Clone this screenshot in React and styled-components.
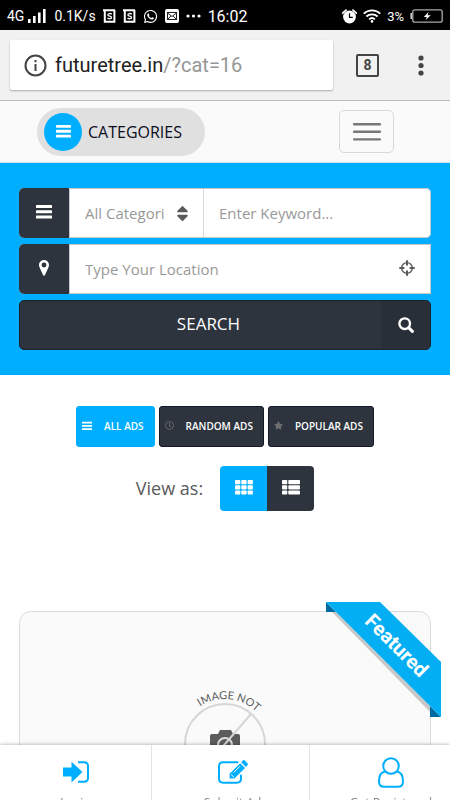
import React from 'react';
import styled, { createGlobalStyle, ThemeProvider } from 'styled-components';
import { FaRegClock, FaSort, FaStar, FaWhatsapp } from 'react-icons/fa';

const THEME = {
    colors: {
        primary: '#00aeff',
        dark: '#2d343e',
        darker: '#292f38',
        light: '#fafafa',
        white: '#ffffff',
        border: '#d8d8d8',
        placeholder: '#999999',
        text: '#5a5a5a',
    },
    fonts: {
        system: 'Roboto, sans-serif',
        page: '"Open Sans", sans-serif',
    },
};

const GlobalStyle = createGlobalStyle`
    * {
        box-sizing: border-box;
    }

    body {
        margin: 0;
        background-color: ${THEME.colors.white};
        font-family: ${THEME.fonts.page};
    }

    button, input, select {
        font-family: inherit;
        margin: 0;
    }

    svg {
        display: block;
        flex-shrink: 0;
    }
`;

const Screen = styled.div`
    height: 100vh;
    overflow: hidden;
`;

const StyleStatusBar = styled.div`
    display: flex;
    align-items: center;
    justify-content: space-between;
    height: 30px;
    padding: 2px 7px 0;
    background-color: #000;
    color: ${({ theme }) => theme.colors.white};
    font-family: ${({ theme }) => theme.fonts.system};
    font-size: 14px;

    .group {
        display: flex;
        align-items: center;
    }

    .group--left {
        gap: 7px;
    }

    .group--right {
        gap: 6px;
        font-size: 13px;
    }

    .network {
        display: flex;
        align-items: center;
        gap: 4px;
    }

    .clock {
        font-size: 16px;
    }
`;

const StyleBrowserBar = styled.div`
    display: flex;
    align-items: center;
    height: 71px;
    padding: 0 26px 0 10px;
    background-color: #f1f1f1;
    border-bottom: 1px solid #bbb;
`;

const UrlBox = styled.div`
    display: flex;
    align-items: center;
    gap: 8px;
    flex: 1;
    height: 50px;
    padding: 0 14px;
    background-color: ${({ theme }) => theme.colors.white};
    border-radius: 2px;
    box-shadow: 0 1px 2px rgba(0, 0, 0, 0.3);
    color: #222;
    font-family: ${({ theme }) => theme.fonts.system};
    font-size: 20px;

    span span {
        color: #969696;
    }
`;

const TabCount = styled.button`
    width: 23px;
    height: 23px;
    margin: 0 39px 0 23px;
    padding: 0;
    background: none;
    border: 2px solid #444;
    border-radius: 2px;
    color: #444;
    font-family: ${({ theme }) => theme.fonts.system};
    font-size: 14px;
    font-weight: 700;
    line-height: 19px;
`;

const PlainButton = styled.button`
    padding: 0;
    background: none;
    border: 0;
    color: #444;
`;

const StyleHeader = styled.header`
    display: flex;
    align-items: center;
    justify-content: space-between;
    height: 62px;
    padding: 0 56px 0 37px;
    background-color: ${({ theme }) => theme.colors.light};
    border-bottom: 1px solid #d5e4ee;
`;

const CategoriesButton = styled.button`
    display: flex;
    align-items: center;
    gap: 6px;
    height: 48px;
    padding: 0 23px 0 7px;
    background-color: #e0e0e0;
    border: 0;
    border-radius: 24px;
    color: #0c0c1c;
    font-size: 16px;
    font-weight: 500;

    .circle {
        display: grid;
        place-items: center;
        width: 38px;
        height: 38px;
        background-color: ${({ theme }) => theme.colors.primary};
        border-radius: 50%;
        color: ${({ theme }) => theme.colors.white};
    }
`;

const MenuButton = styled.button`
    display: grid;
    place-items: center;
    width: 55px;
    height: 43px;
    padding: 0;
    background: none;
    border: 1px solid ${({ theme }) => theme.colors.border};
    border-radius: 5px;
    color: #777;
`;

const SearchForm = styled.form`
    display: flex;
    flex-direction: column;
    gap: 6px;
    padding: 25px 19px;
    background-color: ${({ theme }) => theme.colors.primary};
`;

const Field = styled.div`
    display: flex;
    height: 50px;
    overflow: hidden;
    background-color: ${({ theme }) => theme.colors.white};
    border-radius: ${({ $rounded }) => ($rounded ? '5px' : '5px 0 0 5px')};

    .controls {
        display: flex;
        flex: 1;
        min-width: 0;
        border: 1px solid #c4c8cc;
        border-radius: ${({ $rounded }) => ($rounded ? '0 5px 5px 0' : '0')};
    }
`;

const FieldIcon = styled.label`
    display: grid;
    place-items: center;
    flex: 0 0 50px;
    padding-bottom: 2px;
    background-color: ${({ theme }) => theme.colors.dark};
    color: ${({ theme }) => theme.colors.white};
`;

const SelectWrap = styled.div`
    display: grid;
    flex: 0 0 134px;
    align-items: center;
    border-right: 1px solid ${({ theme }) => theme.colors.border};
    color: ${({ theme }) => theme.colors.text};

    select {
        grid-area: 1 / 1;
        width: 100%;
        height: 48px;
        padding: 0 38px 0 15px;
        appearance: none;
        background: none;
        border: 0;
        color: ${({ theme }) => theme.colors.placeholder};
        font-size: 15px;
    }

    svg {
        grid-area: 1 / 1;
        justify-self: end;
        margin-right: 11px;
        pointer-events: none;
    }
`;

const TextInput = styled.input`
    flex: 1;
    min-width: 0;
    padding: 0 15px;
    background: none;
    border: 0;
    color: ${({ theme }) => theme.colors.text};
    font-size: 15px;

    &::placeholder {
        color: ${({ theme }) => theme.colors.placeholder};
        opacity: 1;
    }
`;

const LocateButton = styled(PlainButton)`
    padding: 0 15px 2px;
    color: ${({ theme }) => theme.colors.text};
`;

const SearchButton = styled.button`
    display: flex;
    align-items: stretch;
    height: 50px;
    padding: 0;
    overflow: hidden;
    background-color: ${({ theme }) => theme.colors.dark};
    border: 1px solid #1c222b;
    border-radius: 5px;
    color: ${({ theme }) => theme.colors.white};
    font-size: 17px;

    .label {
        flex: 1;
        align-self: center;
        padding: 0 0 3px 16px;
    }

    .icon {
        display: grid;
        place-items: center;
        width: 49px;
        background-color: ${({ theme }) => theme.colors.darker};
    }
`;

const Filters = styled.div`
    display: flex;
    justify-content: center;
    gap: 4px;
    padding-top: 31px;
`;

const FilterButton = styled.button`
    display: flex;
    align-items: center;
    gap: 12px;
    height: 41px;
    padding: 0 10px 2px 5px;
    background-color: ${({ theme, $active }) => ($active ? theme.colors.primary : theme.colors.dark)};
    border: 1px solid ${({ theme, $active }) => ($active ? theme.colors.primary : '#14182a')};
    border-radius: 3px;
    color: ${({ theme }) => theme.colors.white};
    font-size: 10px;
    font-weight: 600;
    white-space: nowrap;

    svg {
        color: ${({ $active }) => ($active ? '#fff' : '#6d6d6d')};
    }
`;

const ViewRow = styled.div`
    display: flex;
    align-items: center;
    justify-content: center;
    gap: 17px;
    padding-top: 19px;
    color: ${({ theme }) => theme.colors.text};
    font-size: 18px;

    .label {
        padding-bottom: 2px;
    }

    .toggle {
        display: flex;
    }
`;

const ViewButton = styled.button`
    display: grid;
    place-items: center;
    width: 47px;
    height: 45px;
    padding: 0 0 3px;
    background-color: ${({ theme, $active }) => ($active ? theme.colors.primary : theme.colors.dark)};
    border: 0;
    border-radius: ${({ $active }) => ($active ? '4px 0 0 4px' : '0 4px 4px 0')};
    color: ${({ theme }) => theme.colors.white};
`;

const AdCard = styled.article`
    position: relative;
    display: flex;
    justify-content: center;
    height: 280px;
    margin: 100px 19px 0;
    padding-top: 72px;
    background-color: ${({ theme }) => theme.colors.light};
    border: 1px solid #dcdcdc;
    border-radius: 12px;
`;

const Ribbon = styled.svg`
    position: absolute;
    top: -10px;
    right: -11px;
    font-family: ${({ theme }) => theme.fonts.system};
    font-size: 20px;
    font-weight: 700;
`;

const BottomNav = styled.nav`
    position: fixed;
    right: 0;
    bottom: 0;
    left: 0;
    display: grid;
    grid-template-columns: 152fr 158fr 140fr;
    height: 55px;
    background-color: ${({ theme }) => theme.colors.white};
    box-shadow: 0 0 4px rgba(0, 0, 0, 0.35);
`;

const NavItem = styled.a`
    display: flex;
    flex-direction: column;
    align-items: center;
    gap: 6px;
    padding-top: 11px;
    border-right: 1px solid #e4e4e4;
    color: #888;
    font-size: 12px;
    line-height: 18px;
    text-decoration: none;
    white-space: nowrap;

    &:nth-child(2) {
        padding-left: 4px;
    }

    &:last-child {
        padding-left: 22px;
        border-right: 0;
    }

    .icon {
        display: grid;
        place-items: center;
        height: 32px;
        color: ${({ theme }) => theme.colors.primary};
    }
`;

const BarsIcon = ({ size = 16 }) => (
    <svg width={size} height={size} viewBox="0 0 16 16" fill="currentColor" aria-hidden="true">
        <rect x="0" y="1" width="16" height="3" rx="0.5" />
        <rect x="0" y="6.2" width="16" height="3" rx="0.5" />
        <rect x="0" y="11.4" width="16" height="3" rx="0.5" />
    </svg>
);

const MenuIcon = () => (
    <svg width="28" height="20" viewBox="0 0 28 20" fill="currentColor" aria-hidden="true">
        <rect y="1" width="28" height="2.4" rx="1" />
        <rect y="8.6" width="28" height="2.4" rx="1" />
        <rect y="16.2" width="28" height="2.4" rx="1" />
    </svg>
);

const SignalIcon = () => (
    <svg width="19" height="15" viewBox="0 0 19 15" fill="currentColor" aria-hidden="true">
        <rect x="0" y="10" width="2.6" height="4" />
        <rect x="5" y="7" width="2.6" height="7" />
        <rect x="10" y="3.5" width="2.6" height="10.5" />
        <rect x="15" y="0" width="2.6" height="14" />
    </svg>
);

const AppBadgeIcon = () => (
    <svg width="13" height="14" viewBox="0 0 13 14" fill="none" stroke="currentColor" aria-hidden="true">
        <path d="M0 1.2H12M1.8 1V12.8H11.4V1" strokeWidth="2" />
        <path d="M8.7 5.2C7.8 4.2 4.9 4.3 4.9 5.9C4.9 7.4 8.5 6.8 8.5 8.4C8.5 10 5.2 10 4.5 8.9" strokeWidth="1.4" />
    </svg>
);

const MailIcon = () => (
    <svg width="14" height="14" viewBox="0 0 14 14" aria-hidden="true">
        <rect width="14" height="14" rx="2" fill="#fff" />
        <rect x="2.5" y="3.5" width="9" height="7" fill="none" stroke="#222" />
        <path d="M2.5 4L7 7.5L11.5 4M3 10L5.8 7M11 10L8.2 7" fill="none" stroke="#222" />
    </svg>
);

const MoreIcon = () => (
    <svg width="15" height="4" viewBox="0 0 15 4" fill="currentColor" aria-hidden="true">
        <circle cx="2" cy="2" r="1.6" />
        <circle cx="7.5" cy="2" r="1.6" />
        <circle cx="13" cy="2" r="1.6" />
    </svg>
);

const AlarmIcon = () => (
    <svg width="15" height="15" viewBox="0 0 15 15" aria-hidden="true">
        <path d="M0.7 4.2L4 1.2M14.3 4.2L11 1.2" stroke="#fff" strokeWidth="1.8" strokeLinecap="round" />
        <circle cx="7.5" cy="8" r="6.4" fill="#fff" />
        <path d="M7.5 4.2V8.3H10.8" fill="none" stroke="#000" strokeWidth="1.2" />
    </svg>
);

const WifiIcon = () => (
    <svg width="18" height="14" viewBox="0 0 18 14" fill="none" stroke="currentColor" strokeWidth="1.8" aria-hidden="true">
        <path d="M0.7 4.6C5.4 0.2 12.6 0.2 17.3 4.6" />
        <path d="M3.4 7.5C6.6 4.6 11.4 4.6 14.6 7.5" />
        <path d="M6.1 10.3C7.8 8.8 10.2 8.8 11.9 10.3" />
        <circle cx="9" cy="12.4" r="1.3" fill="currentColor" stroke="none" />
    </svg>
);

const BatteryIcon = () => (
    <svg width="33" height="14" viewBox="0 0 33 14" aria-hidden="true">
        <path d="M1.2 4V10" stroke="#ccc" strokeWidth="1.6" />
        <rect x="2.8" y="0.8" width="29.4" height="12.4" rx="2" fill="none" stroke="#aaa" strokeWidth="1.3" />
        <path d="M18.5 3L13.8 8H16.8L15.6 11L20.8 6.3H17.6Z" fill="#fff" />
    </svg>
);

const InfoIcon = () => (
    <svg width="23" height="23" viewBox="0 0 23 23" fill="none" stroke="#444" strokeWidth="2" aria-hidden="true">
        <circle cx="11.5" cy="11.5" r="10" />
        <path d="M11.5 10V17M11.5 6V8.2" />
    </svg>
);

const DotsIcon = () => (
    <svg width="6" height="21" viewBox="0 0 6 21" fill="currentColor" aria-hidden="true">
        <circle cx="3" cy="3" r="2.6" />
        <circle cx="3" cy="10.5" r="2.6" />
        <circle cx="3" cy="18" r="2.6" />
    </svg>
);

const MarkerIcon = () => (
    <svg width="10" height="16" viewBox="0 0 10 16" fill="currentColor" fillRule="evenodd" aria-hidden="true">
        <path d="M5 0C7.8 0 10 2.2 10 5C10 6 9.8 6.7 9.4 7.5L6 15C5.6 16 4.4 16 4 15L0.6 7.5C0.2 6.7 0 6 0 5C0 2.2 2.2 0 5 0ZM5 2.6A2.4 2.4 0 1 0 5 7.4A2.4 2.4 0 1 0 5 2.6Z" />
    </svg>
);

const CrosshairIcon = () => (
    <svg width="16" height="16" viewBox="0 0 16 16" fill="none" stroke="currentColor" aria-hidden="true">
        <circle cx="8" cy="8" r="5.4" strokeWidth="1.4" />
        <path d="M8 0.3V5.4M8 10.6V15.7M0.3 8H5.4M10.6 8H15.7" strokeWidth="2" />
    </svg>
);

const SearchIcon = () => (
    <svg width="16" height="16" viewBox="0 0 16 16" fill="none" stroke="currentColor" aria-hidden="true">
        <circle cx="6.7" cy="6.7" r="5.3" strokeWidth="2.4" />
        <path d="M10.6 10.6L14.4 14.4" strokeWidth="3" strokeLinecap="round" />
    </svg>
);

const GRID_ROWS = [0, 5.2, 10.4];

const GridIcon = () => (
    <svg width="18" height="15" viewBox="0 0 18 15" fill="currentColor" aria-hidden="true">
        {GRID_ROWS.map((y) => (
            <g key={y}>
                <rect x="0" y={y} width="5.3" height="4.2" rx="0.8" />
                <rect x="6.3" y={y} width="5.3" height="4.2" rx="0.8" />
                <rect x="12.6" y={y} width="5.3" height="4.2" rx="0.8" />
            </g>
        ))}
    </svg>
);

const ListIcon = () => (
    <svg width="18" height="15" viewBox="0 0 18 15" fill="currentColor" aria-hidden="true">
        {GRID_ROWS.map((y) => (
            <g key={y}>
                <rect x="0" y={y} width="5.3" height="4.2" rx="0.8" />
                <rect x="6.3" y={y} width="11.7" height="4.2" rx="0.8" />
            </g>
        ))}
    </svg>
);

const LoginIcon = () => (
    <svg width="26" height="22" viewBox="0 0 26 22" aria-hidden="true">
        <path d="M0 6.5H8.5V0.8L19.5 11L8.5 21.4V15.4H0Z" fill="currentColor" />
        <path d="M15 1.2H21Q25 1.2 25 5V17Q25 20.8 21 20.8H15" fill="none" stroke="currentColor" strokeWidth="2" />
    </svg>
);

const EditIcon = () => (
    <svg width="30" height="24" viewBox="0 0 30 24" aria-hidden="true">
        <path
            d="M19.5 2.2H5.2Q1 2.2 1 6.4V18.6Q1 22.8 5.2 22.8H18.8Q23 22.8 23 18.6V15.5"
            fill="none"
            stroke="currentColor"
            strokeWidth="2"
            strokeLinecap="round"
        />
        <path d="M22.2 3.2L27 8L16.4 18.6H11.6V13.8Z" fill="currentColor" />
        <path d="M23.2 2.2L24.8 0.6Q25.8 -0.4 26.8 0.6L29.4 3.2Q30.4 4.2 29.4 5.2L27.9 6.9Z" fill="currentColor" />
        <path d="M13 14.4L16 17.3M15.6 12.6L22 6.2" stroke="#fff" strokeWidth="1" />
    </svg>
);

const UserIcon = () => (
    <svg width="26" height="31" viewBox="0 0 26 31" fill="none" stroke="currentColor" strokeWidth="2" aria-hidden="true">
        <circle cx="13" cy="9" r="7.8" />
        <path d="M7.4 14.4C3.2 14.8 1 19 1 24.5C1 27.8 3 29.8 6 29.8H20C23 29.8 25 27.8 25 24.5C25 19 22.8 14.8 18.6 14.4" />
    </svg>
);

// placeholder drawing for ads without a photo
const NoImage = () => (
    <svg width="120" height="120" viewBox="-60 -60 120 120" role="img" aria-label="Image not available">
        <defs>
            <path id="caption" d="M-45 0A45 45 0 0 1 45 0" />
        </defs>
        <circle r="40" fill="none" stroke="#d6d6d6" strokeWidth="2" />
        <path d="M-15 -8Q-15 -10 -13 -10H-7L-5 -14H6L8 -10H13Q15 -10 15 -8V10Q15 12 13 12H-13Q-15 12 -15 10Z" fill="#5c5c5c" />
        <circle r="7" cy="1" fill="#5c5c5c" stroke="#ddd" strokeWidth="2" />
        <path d="M26 -30L-26 30" stroke="#d6d6d6" strokeWidth="2" />
        <text fill="#5c5c5c" fontFamily="Lato, sans-serif" fontSize="11" textAnchor="middle">
            <textPath href="#caption" startOffset="53%">IMAGE NOT</textPath>
        </text>
    </svg>
);

const FeaturedRibbon = () => (
    <Ribbon width="115" height="115" viewBox="0 0 115 115">
        <path d="M10 10L104 104V110L6 10Z" fill="#c8c8c8" />
        <path d="M0 0V10H10ZM104 104V115H115Z" fill="#006a9e" />
        <path d="M0 0H54L115 60V115Z" fill="#03aef3" />
        <text x="70" y="50" fill="#fff" textAnchor="middle" transform="rotate(45 70 44)">Featured</text>
    </Ribbon>
);

const FILTERS = [
    { name: 'ALL ADS', icon: <BarsIcon size={10} />, active: true },
    { name: 'RANDOM ADS', icon: <FaRegClock size={9} /> },
    { name: 'POPULAR ADS', icon: <FaStar size={9} /> },
];

const LINKS = [
    { to: '#login', name: 'Login', icon: <LoginIcon /> },
    { to: '#submit', name: 'Submit Ad', icon: <EditIcon /> },
    { to: '#register', name: 'Get Registered', icon: <UserIcon /> },
];

const StatusBar = () => (
    <StyleStatusBar>
        <div className="group group--left">
            <div className="network">
                4G
                <SignalIcon />
            </div>
            <span>0.1K/s</span>
            <AppBadgeIcon />
            <AppBadgeIcon />
            <FaWhatsapp size={15} />
            <MailIcon />
            <MoreIcon />
            <span className="clock">16:02</span>
        </div>
        <div className="group group--right">
            <AlarmIcon />
            <WifiIcon />
            <span>3%</span>
            <BatteryIcon />
        </div>
    </StyleStatusBar>
);

const BrowserBar = () => (
    <StyleBrowserBar>
        <UrlBox>
            <InfoIcon />
            <span>futuretree.in<span>/?cat=16</span></span>
        </UrlBox>
        <TabCount type="button" aria-label="8 open tabs">8</TabCount>
        <PlainButton type="button" aria-label="More options"><DotsIcon /></PlainButton>
    </StyleBrowserBar>
);

const Header = () => (
    <StyleHeader>
        <CategoriesButton type="button">
            <span className="circle"><BarsIcon size={15} /></span>
            CATEGORIES
        </CategoriesButton>
        <MenuButton type="button" aria-label="Toggle navigation"><MenuIcon /></MenuButton>
    </StyleHeader>
);

const Search = () => (
    <SearchForm onSubmit={(e) => e.preventDefault()}>
        <Field $rounded>
            <FieldIcon htmlFor="category" aria-label="Category"><BarsIcon /></FieldIcon>
            <div className="controls">
                <SelectWrap>
                    <select id="category">
                        <option>All Categories</option>
                    </select>
                    <FaSort size={19} />
                </SelectWrap>
                <TextInput type="text" aria-label="Keyword" placeholder="Enter Keyword..." />
            </div>
        </Field>
        <Field>
            <FieldIcon htmlFor="location" aria-label="Location"><MarkerIcon /></FieldIcon>
            <div className="controls">
                <TextInput id="location" type="text" placeholder="Type Your Location" />
                <LocateButton type="button" aria-label="Use my location"><CrosshairIcon /></LocateButton>
            </div>
        </Field>
        <SearchButton type="submit">
            <span className="label">SEARCH</span>
            <span className="icon"><SearchIcon /></span>
        </SearchButton>
    </SearchForm>
);

const App = () => {
    return (
        <ThemeProvider theme={THEME}>
            <GlobalStyle />
            <Screen>
                <StatusBar />
                <BrowserBar />
                <Header />
                <main>
                    <Search />
                    <Filters>
                        {FILTERS.map((filter) => (
                            <FilterButton key={filter.name} type="button" $active={filter.active}>
                                {filter.icon}
                                {filter.name}
                            </FilterButton>
                        ))}
                    </Filters>
                    <ViewRow>
                        <span className="label">View as:</span>
                        <div className="toggle">
                            <ViewButton type="button" aria-label="Grid" $active><GridIcon /></ViewButton>
                            <ViewButton type="button" aria-label="List"><ListIcon /></ViewButton>
                        </div>
                    </ViewRow>
                    <AdCard>
                        <NoImage />
                        <FeaturedRibbon />
                    </AdCard>
                </main>
                <BottomNav>
                    {LINKS.map((link) => (
                        <NavItem key={link.to} href={link.to}>
                            <span className="icon">{link.icon}</span>
                            {link.name}
                        </NavItem>
                    ))}
                </BottomNav>
            </Screen>
        </ThemeProvider>
    );
};

export default App;
